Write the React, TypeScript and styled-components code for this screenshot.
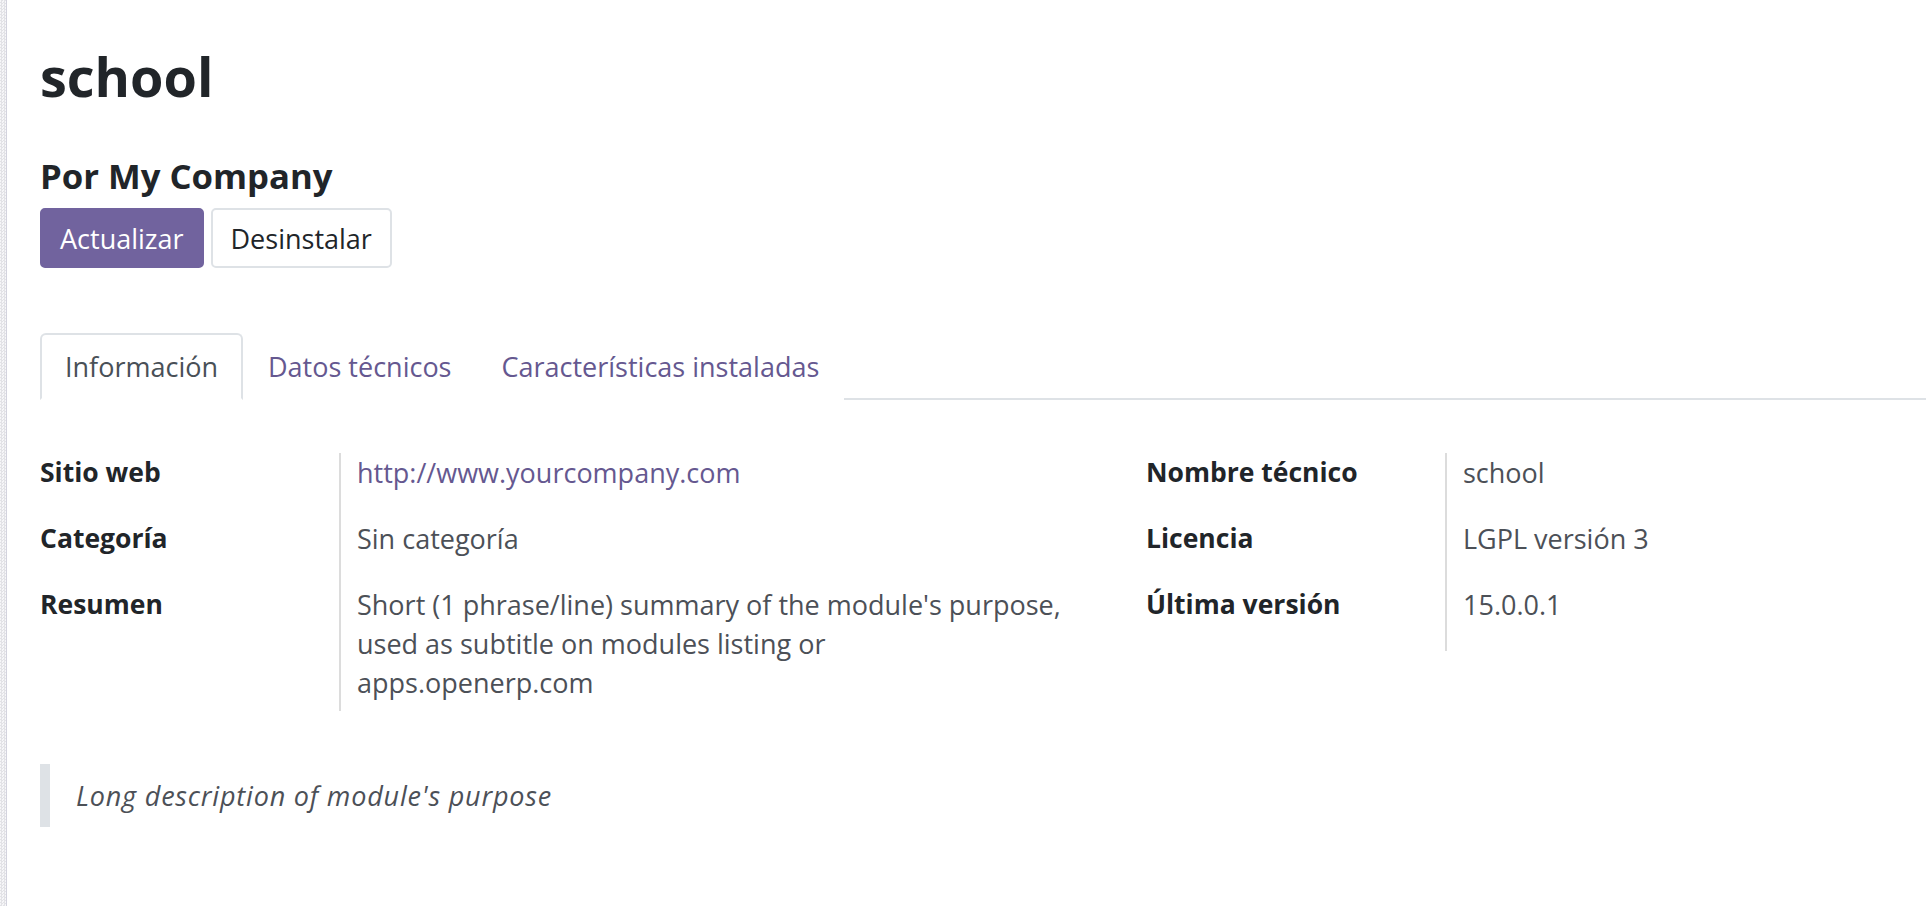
import React from "react";
import styled, { createGlobalStyle } from "styled-components";

const Global = createGlobalStyle`
  html, body { margin: 0; padding: 0; background: #ffffff; }
  body { font-family: "Open Sans", "DejaVu Sans", sans-serif; overflow: hidden; }
  * { box-sizing: border-box; }
`;

const Page = styled.div`
  display: flex;
  min-height: 906px;
  background: #ffffff;
`;

const Gutter = styled.div`
  width: 7px;
  flex: 0 0 7px;
  border-right: 1px solid #d3d3de;
  background-color: #f1f1f3;
  background-image: repeating-conic-gradient(#e2e2e6 0% 25%, #f6f6f8 0% 50%);
  background-size: 3px 3px;
`;

const Sheet = styled.main`
  flex: 1;
  padding: 44px 0 0 33px;
  color: #4c5057;
  font-size: 27px;
  line-height: 39px;
`;

const Title = styled.h1`
  margin: 0;
  font-size: 54px;
  line-height: 64px;
  font-weight: 700;
  color: #212529;
`;

const Subtitle = styled.h3`
  margin: 48px 0 0;
  font-size: 34.7px;
  line-height: 40px;
  font-weight: 700;
  color: #212529;
`;

const ButtonRow = styled.div`
  display: flex;
  gap: 7px;
  margin-top: 12px;
`;

const Button = styled.button<{ $primary?: boolean }>`
  height: 60px;
  padding: 0 18px;
  border-radius: 5px;
  font-family: inherit;
  font-size: 27px;
  line-height: 39px;
  border: 2px solid ${(p) => (p.$primary ? "#71639e" : "#dee2e6")};
  background: ${(p) => (p.$primary ? "#71639e" : "#ffffff")};
  color: ${(p) => (p.$primary ? "#ffffff" : "#212529")};
`;

const TabBar = styled.ul`
  display: flex;
  list-style: none;
  margin: 65px 0 0;
  padding: 0;
  border-bottom: 2px solid #dee2e6;
`;

const Tab = styled.li<{ $active?: boolean }>`
  margin-bottom: -2px;
  padding: 12px 23px;
  font-size: 27px;
  line-height: 39px;
  border: 2px solid ${(p) => (p.$active ? "#dee2e6" : "transparent")};
  border-bottom-color: ${(p) => (p.$active ? "#ffffff" : "transparent")};
  border-radius: 6px 6px 0 0;
  background: #ffffff;
  color: ${(p) => (p.$active ? "#495057" : "#655890")};
`;

const Groups = styled.div`
  display: grid;
  grid-template-columns: 1106px 1fr;
  margin-top: 53px;
  align-items: start;
`;

const Group = styled.div`
  display: grid;
  grid-template-columns: 299px 1fr;
`;

const Label = styled.div<{ $tail?: number }>`
  font-size: 26.5px;
  font-weight: 700;
  color: #212529;
  padding-bottom: ${(p) => (p.$tail ?? 27)}px;
`;

const Value = styled.div<{ $tail?: number }>`
  border-left: 2px solid #dcdcdc;
  padding-left: 16px;
  padding-bottom: ${(p) => (p.$tail ?? 27)}px;
  color: #4c5057;
`;

const Link = styled.a`
  color: #655890;
  text-decoration: none;
`;

const Quote = styled.blockquote`
  margin: 53px 0 0;
  padding: 12px 0 12px 26px;
  border-left: 10px solid #dee2e6;
  font-style: italic;
  letter-spacing: 0.8px;
  color: #4c5057;
`;

export default function App() {
  return (
    <>
      <Global />
      <Page>
        <Gutter />
        <Sheet>
          <Title>school</Title>
          <Subtitle>Por My Company</Subtitle>
          <ButtonRow>
            <Button $primary>Actualizar</Button>
            <Button>Desinstalar</Button>
          </ButtonRow>
          <TabBar>
            <Tab $active>Información</Tab>
            <Tab>Datos técnicos</Tab>
            <Tab>Características instaladas</Tab>
          </TabBar>
          <Groups>
            <Group>
              <Label>Sitio web</Label>
              <Value>
                <Link href="#">http://www.yourcompany.com</Link>
              </Value>
              <Label>Categoría</Label>
              <Value>Sin categoría</Value>
              <Label $tail={9}>Resumen</Label>
              <Value $tail={9}>
                Short (1 phrase/line) summary of the module's purpose,
                <br />
                used as subtitle on modules listing or
                <br />
                apps.openerp.com
              </Value>
            </Group>
            <Group>
              <Label>Nombre técnico</Label>
              <Value>school</Value>
              <Label>Licencia</Label>
              <Value>LGPL versión 3</Value>
              <Label>Última versión</Label>
              <Value>15.0.0.1</Value>
            </Group>
          </Groups>
          <Quote>Long description of module's purpose</Quote>
        </Sheet>
      </Page>
    </>
  );
}
